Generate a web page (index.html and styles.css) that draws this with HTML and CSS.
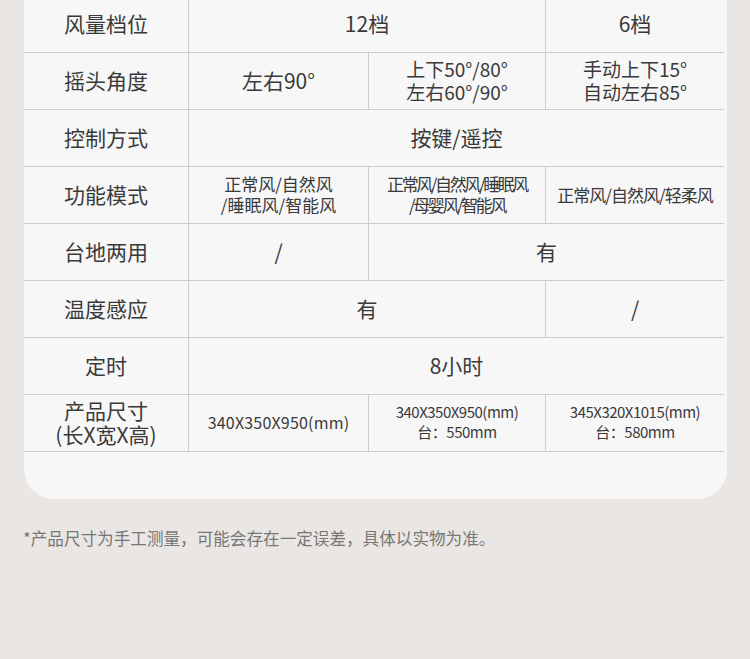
FILE: index.html
```html
<!DOCTYPE html>
<html lang="zh">
<head>
<meta charset="utf-8">
<link rel="stylesheet" href="styles.css">
</head>
<body>
<div class="card">
  <div class="table">
    <div class="cell label">风量档位</div>
    <div class="cell v span2">12档</div>
    <div class="cell v">6档</div>

    <div class="cell label">摇头角度</div>
    <div class="cell v">左右90°</div>
    <div class="cell v two">上下50°/80°<br>左右60°/90°</div>
    <div class="cell v two">手动上下15°<br>自动左右85°</div>

    <div class="cell label">控制方式</div>
    <div class="cell v span3">按键/遥控</div>

    <div class="cell label">功能模式</div>
    <div class="cell v mode wide">正常风/自然风<br>/睡眠风/智能风</div>
    <div class="cell v mode tight">正常风/自然风/睡眠风<br>/母婴风/智能风</div>
    <div class="cell v mode">正常风/自然风/轻柔风</div>

    <div class="cell label">台地两用</div>
    <div class="cell v">/</div>
    <div class="cell v span2">有</div>

    <div class="cell label">温度感应</div>
    <div class="cell v span2">有</div>
    <div class="cell v">/</div>

    <div class="cell label">定时</div>
    <div class="cell v span3">8小时</div>

    <div class="cell label two-label">产品尺寸<br>(长X宽X高)</div>
    <div class="cell v size">340X350X950(mm)</div>
    <div class="cell v size small">340X350X950(mm)<br>台：550mm</div>
    <div class="cell v size small">345X320X1015(mm)<br>台：580mm</div>
  </div>
</div>
<p class="note">*产品尺寸为手工测量，可能会存在一定误差，具体以实物为准。</p>
</body>
</html>
```

FILE: styles.css
```css
html, body {
  margin: 0;
  padding: 0;
}
body {
  background: #eae6e3;
  width: 750px;
  height: 659px;
  overflow: hidden;
  font-family: "Noto Sans CJK SC", "Noto Sans", sans-serif;
  color: #3a3a3a;
}
.card {
  margin: -4px 0 0 24px;
  width: 703px;
  background: #f7f7f7;
  border-radius: 0 0 30px 30px;
  padding-bottom: 47px;
}
.table {
  width: 700px;
  display: grid;
  grid-template-columns: 164px 180px 177px 179px;
  grid-auto-rows: 57px;
}
.cell {
  box-sizing: border-box;
  border-bottom: 1px solid #cdcdcd;
  display: flex;
  align-items: center;
  justify-content: center;
  text-align: center;
  font-size: 21px;
  line-height: 26px;
  white-space: nowrap;
  padding-bottom: 2px;
}
.v {
  border-left: 1px solid #cdcdcd;
}
.span2 { grid-column: span 2; }
.span3 { grid-column: span 3; }
.two {
  font-size: 19px;
  line-height: 23px;
}
.mode {
  font-size: 17px;
  line-height: 21px;
  letter-spacing: -1px;
}
.mode.wide {
  letter-spacing: 0;
}
.mode.tight {
  letter-spacing: -2.4px;
}
.two-label {
  line-height: 24px;
}
.size {
  font-size: 16px;
  line-height: 20px;
  letter-spacing: 0.2px;
}
.size.small {
  font-size: 15px;
  letter-spacing: -0.5px;
}
.note {
  margin: 27px 0 0 23px;
  font-size: 16.6px;
  line-height: 24px;
  color: #777777;
}
```
